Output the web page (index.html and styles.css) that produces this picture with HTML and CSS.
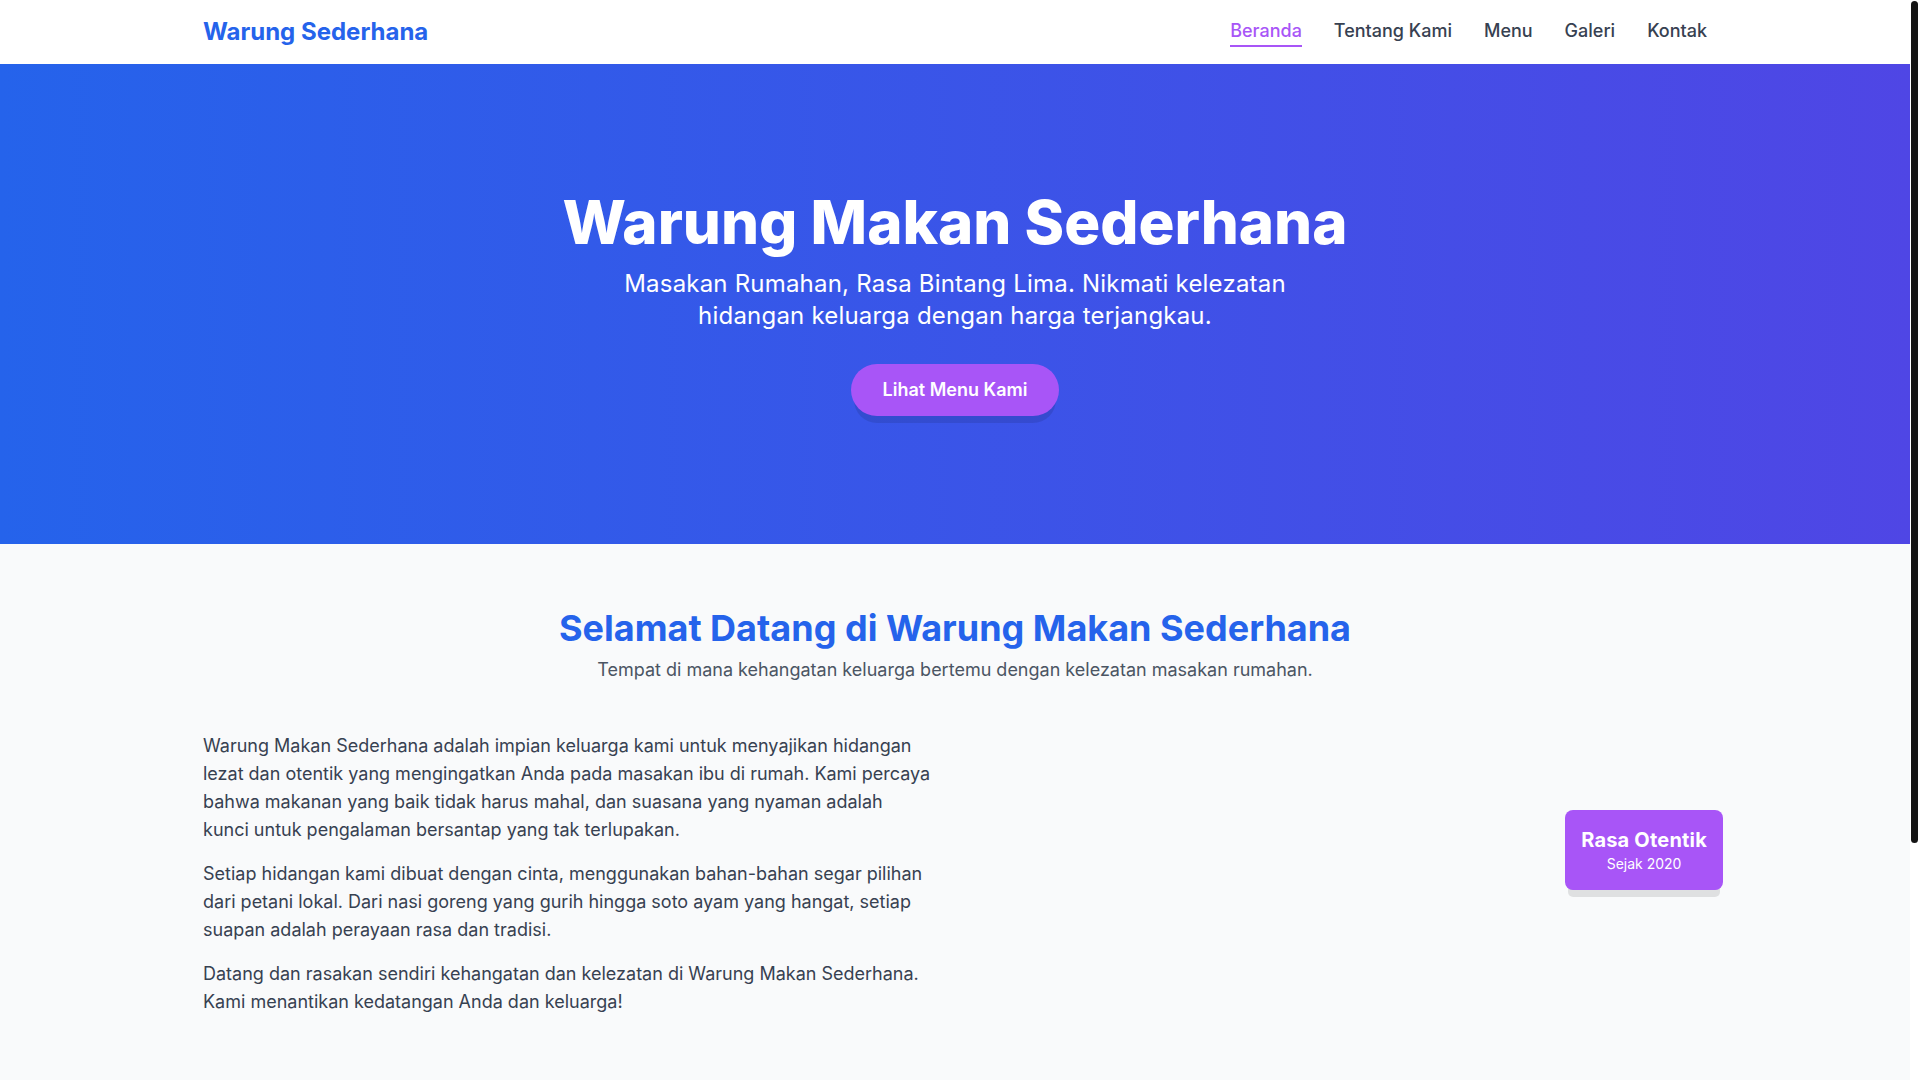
FILE: index.html
```html
<!DOCTYPE html>
<html lang="id">
<head>
<meta charset="utf-8">
<title>Warung Makan Sederhana</title>
<link rel="stylesheet" href="styles.css">
</head>
<body>
<div class="page">
<header class="navbar">
  <div class="container nav-inner">
    <a class="logo" href="#">Warung Sederhana</a>
    <nav class="nav-links">
      <a class="nav-link active" href="#">Beranda</a>
      <a class="nav-link" href="#">Tentang Kami</a>
      <a class="nav-link" href="#">Menu</a>
      <a class="nav-link" href="#">Galeri</a>
      <a class="nav-link" href="#">Kontak</a>
    </nav>
  </div>
</header>

<section class="hero">
  <div class="container hero-inner">
    <h1 class="hero-title">Warung Makan Sederhana</h1>
    <p class="hero-sub">Masakan Rumahan, Rasa Bintang Lima. Nikmati kelezatan hidangan keluarga dengan harga terjangkau.</p>
    <a class="btn" href="#">Lihat Menu Kami</a>
  </div>
</section>

<section class="about">
  <div class="container">
    <h2 class="section-title">Selamat Datang di Warung Makan Sederhana</h2>
    <p class="section-sub">Tempat di mana kehangatan keluarga bertemu dengan kelezatan masakan rumahan.</p>
    <div class="about-grid">
      <div class="about-text">
        <p>Warung Makan Sederhana adalah impian keluarga kami untuk menyajikan hidangan lezat dan otentik yang mengingatkan Anda pada masakan ibu di rumah. Kami percaya bahwa makanan yang baik tidak harus mahal, dan suasana yang nyaman adalah kunci untuk pengalaman bersantap yang tak terlupakan.</p>
        <p>Setiap hidangan kami dibuat dengan cinta, menggunakan bahan-bahan segar pilihan dari petani lokal. Dari nasi goreng yang gurih hingga soto ayam yang hangat, setiap suapan adalah perayaan rasa dan tradisi.</p>
        <p>Datang dan rasakan sendiri kehangatan dan kelezatan di Warung Makan Sederhana. Kami menantikan kedatangan Anda dan keluarga!</p>
      </div>
      <div class="about-media">
        <div class="badge">
          <div class="badge-title">Rasa Otentik</div>
          <div class="badge-sub">Sejak 2020</div>
        </div>
      </div>
    </div>
  </div>
</section>

<section class="menu">
  <div class="container">
    <h2 class="section-title">Menu Andalan Kami</h2>
    <p class="section-sub">Pilihan hidangan favorit pelanggan setia kami.</p>
  </div>
</section>
</div>
<div class="scroll-thumb" aria-hidden="true"></div>
</body>
</html>
```

FILE: styles.css
```css
* { box-sizing: border-box; }

html, body { scrollbar-width: none; }
::-webkit-scrollbar { width: 0; height: 0; }

body {
  margin: 0;
  padding-right: 10px;
  font-family: Inter, "Noto Sans", "Liberation Sans", sans-serif;
  color: #374151;
  background: #ffffff;
}

a { text-decoration: none; }

.page { width: 100%; }

.scroll-thumb {
  position: fixed;
  top: 1px;
  right: 2px;
  width: 7px;
  height: 842px;
  background: #141414;
  border-radius: 4px;
}

.container {
  max-width: 1536px;
  margin: 0 auto;
  padding: 0 16px;
}

/* NAV */
.navbar {
  background: #ffffff;
  height: 64px;
}
.nav-inner {
  height: 64px;
  display: flex;
  align-items: center;
  justify-content: space-between;
}
.logo {
  font-size: 24px;
  line-height: 32px;
  font-weight: 700;
  color: #2563eb;
}
.nav-links {
  display: flex;
  gap: 32px;
  align-items: center;
}
.nav-link {
  font-size: 18px;
  line-height: 28px;
  font-weight: 500;
  color: #374151;
  border-bottom: 2px solid transparent;
}
.nav-link.active {
  color: #a855f7;
  border-bottom-color: #a855f7;
}

/* HERO */
.hero {
  background: linear-gradient(to right, #2563eb, #4f46e5);
  color: #ffffff;
}
.hero-inner {
  padding-top: 128px;
  padding-bottom: 128px;
  text-align: center;
}
.hero-title {
  margin: 0 0 16px;
  font-size: 60px;
  line-height: 60px;
  font-weight: 800;
}
.hero-sub {
  margin: 0 auto 32px;
  max-width: 672px;
  font-size: 24px;
  line-height: 32px;
  font-weight: 400;
  letter-spacing: 0.2px;
}
.btn {
  display: inline-block;
  background: #a855f7;
  color: #ffffff;
  font-size: 18px;
  line-height: 28px;
  font-weight: 600;
  padding: 12px 32px;
  border-radius: 9999px;
  box-shadow: 0 10px 0 -3px rgba(0, 0, 0, 0.1), 0 4px 0 -4px rgba(0, 0, 0, 0.1);
}

/* ABOUT */
.about {
  background: #f9fafb;
  padding: 64px 0;
}
.section-title {
  margin: 0 0 8px;
  text-align: center;
  font-size: 36px;
  line-height: 40px;
  font-weight: 700;
  color: #2563eb;
}
.section-sub {
  margin: 0 0 48px;
  text-align: center;
  font-size: 18px;
  line-height: 28px;
  color: #4b5563;
}
.about-grid {
  display: grid;
  grid-template-columns: 1fr 1fr;
  gap: 48px;
  align-items: center;
}
.about-text p {
  margin: 0 0 16px;
  font-size: 18px;
  line-height: 28px;
  color: #374151;
}
.about-text p:last-child { margin-bottom: 0; }

.about-media {
  position: relative;
  height: 0;
}
.badge {
  position: absolute;
  right: -16px;
  bottom: -16px;
  background: #a855f7;
  color: #ffffff;
  padding: 16px;
  border-radius: 8px;
  text-align: center;
  box-shadow: 0 10px 0 -3px rgba(0, 0, 0, 0.1), 0 4px 0 -4px rgba(0, 0, 0, 0.1);
}
.badge-title {
  font-size: 20px;
  line-height: 28px;
  font-weight: 700;
  letter-spacing: 0.2px;
}
.badge-sub {
  font-size: 14px;
  line-height: 20px;
}

/* MENU (below the fold) */
.menu {
  background: #ffffff;
  padding: 64px 0 96px;
}
```
